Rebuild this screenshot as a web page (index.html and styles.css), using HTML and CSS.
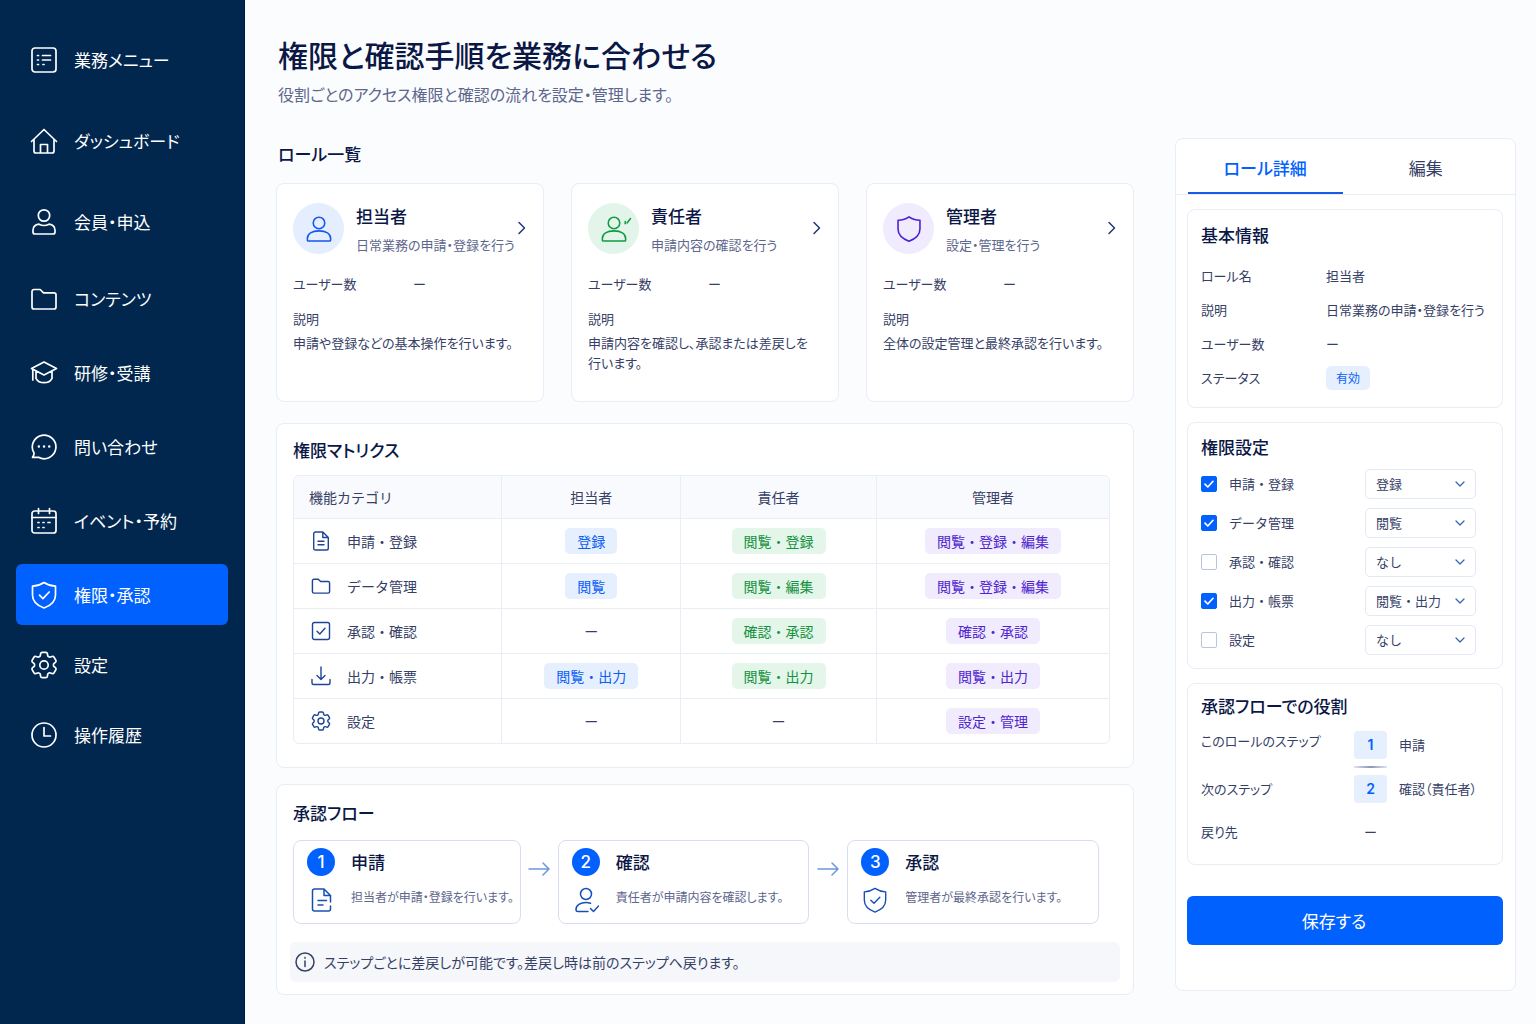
FILE: index.html
```html
<!DOCTYPE html>
<html lang="ja">
<head>
    <meta charset="UTF-8">
    <meta name="viewport" content="width=device-width, initial-scale=1.0">
    <title>権限・承認</title>
    <link rel="stylesheet" href="styles.css">
</head>
<body>
    <!-- Icon sprite -->
    <svg class="sprite" aria-hidden="true">
        <symbol id="i-list" viewBox="0 0 28 28">
            <rect x="2" y="2" width="24" height="24" rx="3"/>
            <path d="M12.5 9.5h8M12.5 14h8M7.5 9.5h1M7.5 14h1M7.5 18.5h1M13 18.5h1"/>
        </symbol>
        <symbol id="i-home" viewBox="0 0 28 28">
            <path d="M1.5 14.5 14 2.5l12.500 12M4 12.500V24a2 2 0 0 0 2 2h16a2 2 0 0 0 2-2V12.500M10.500 26v-8.500h7V26"/>
        </symbol>
        <symbol id="i-user" viewBox="0 0 28 28">
            <circle cx="14" cy="7.500" r="5.700"/>
            <path d="M9 16.200c-3.500.5-6 2.800-6 6V24a2 2 0 0 0 2 2h18a2 2 0 0 0 2-2v-1.800c0-3.200-2.500-5.500-6-6-1.500.8-3 1.300-5 1.300s-3.500-.5-5-1.300z"/>
        </symbol>
        <symbol id="i-member" viewBox="0 0 28 28">
            <circle cx="14" cy="7.500" r="6.200"/>
            <path d="M14 16c-7.500 0-12.500 3-12.500 8V26c0 .6.400 1 1 1h23c.6 0 1-.4 1-1v-2C26.500 19 21.500 16 14 16z"/>
        </symbol>
        <symbol id="i-folder" viewBox="0 0 28 28">
            <path d="M2 6.500a2 2 0 0 1 2-2h6.200l3.300 3.300H24a2 2 0 0 1 2 2V22a2 2 0 0 1-2 2H4a2 2 0 0 1-2-2z"/>
        </symbol>
        <symbol id="i-cap" viewBox="0 0 28 28">
            <path d="M14 3 26.500 9.500 14 16 1.500 9.500zM2.800 10.500V21M6 12.500v6.800c1.400 2.800 4.400 4.400 8 4.400s6.600-1.600 8-4.400v-6.800"/>
        </symbol>
        <symbol id="i-chat" viewBox="0 0 28 28">
            <path d="M8.500 24.300H2.500c1.200-1.500 1.700-2.800 1.500-4.300a11.800 11.800 0 1 1 4.500 4.300z"/>
            <path class="dots" d="M8.800 13.500h.1M14 13.500h.1M19.200 13.500h.1"/>
        </symbol>
        <symbol id="i-calendar" viewBox="0 0 28 28">
            <rect x="2" y="4" width="24" height="22" rx="2.500"/>
            <path d="M8.500 1.500v5M19.500 1.500v5M2 10.500h24M8 15.500h1M13 15.500h1M18 15.500h2M8 20.500h1M13 20.500h1"/>
        </symbol>
        <symbol id="i-shield-check" viewBox="0 0 28 28">
            <path d="M14 1.500c3.400 2.300 7.300 3.500 11.500 3.700V14c0 6-4.500 10.500-11.500 13C7 24.500 2.500 20 2.500 14V5.200C6.700 5 10.600 3.800 14 1.500z"/>
            <path d="m9.500 14.200 3.400 3.400 6.300-6.600"/>
        </symbol>
        <symbol id="i-shield" viewBox="0 0 28 28">
            <path d="M14 1c3 2.200 7 3.400 11.800 3.600V14c0 5.800-4.300 10.300-11.800 13.200C6.500 24.300 2.200 19.800 2.200 14V4.600C7 4.400 11 3.200 14 1z"/>
        </symbol>
        <symbol id="i-gear" viewBox="2 2 20 20">
            <path d="M9.594 3.940c.09-.542.56-.94 1.110-.94h2.593c.55 0 1.020.398 1.110.94l.213 1.281c.063.374.313.686.645.87.074.04.147.083.22.127.325.196.72.257 1.075.124l1.217-.456a1.125 1.125 0 0 1 1.370.49l1.296 2.247a1.125 1.125 0 0 1-.26 1.431l-1.003.827c-.293.241-.438.613-.43.992a7.723 7.723 0 0 1 0 .255c-.008.378.137.75.43.991l1.004.827c.424.35.534.955.26 1.430l-1.298 2.247a1.125 1.125 0 0 1-1.369.491l-1.217-.456c-.355-.133-.75-.072-1.076.124a6.470 6.470 0 0 1-.22.128c-.331.183-.581.495-.644.869l-.213 1.281c-.09.543-.56.94-1.110.94h-2.594c-.55 0-1.019-.398-1.110-.94l-.213-1.281c-.062-.374-.312-.686-.644-.87a6.520 6.520 0 0 1-.22-.127c-.325-.196-.72-.257-1.076-.124l-1.217.456a1.125 1.125 0 0 1-1.369-.49l-1.297-2.247a1.125 1.125 0 0 1 .26-1.431l1.004-.827c.292-.24.437-.613.43-.991a6.932 6.932 0 0 1 0-.255c.007-.38-.138-.751-.43-.992l-1.004-.827a1.125 1.125 0 0 1-.26-1.430l1.297-2.247a1.125 1.125 0 0 1 1.370-.491l1.216.456c.356.133.751.072 1.076-.124.072-.044.146-.086.22-.128.332-.183.582-.495.644-.869z"/>
            <circle cx="12" cy="12" r="3"/>
        </symbol>
        <symbol id="i-clock" viewBox="0 0 28 28">
            <circle cx="14" cy="14" r="12"/>
            <path d="M14 6.500V15h6.500"/>
        </symbol>
        <symbol id="i-doc" viewBox="0 0 20 20">
            <path d="M11.800 1H4.500A1.800 1.800 0 0 0 2.700 2.800v14.400A1.800 1.800 0 0 0 4.500 19h11a1.800 1.800 0 0 0 1.800-1.800V6.500zM11.800 1v5.500h5.500M7 10.300h6M7 13.800h6"/>
        </symbol>
        <symbol id="i-doc-edit" viewBox="0 0 26 26">
            <path d="M22.500 19v3a2 2 0 0 1-2 2h-14a2 2 0 0 1-2-2V4a2 2 0 0 1 2-2H16l6.500 6.500V15M16 2v6.500h6.500M10 13.500h8.500M10 18h5"/>
        </symbol>
        <symbol id="i-check-box" viewBox="0 0 20 20">
            <rect x="1.500" y="1.500" width="17" height="17" rx="2"/>
            <path d="m6 10.300 2.800 2.700L14 7.300"/>
        </symbol>
        <symbol id="i-download" viewBox="0 0 20 20">
            <path d="M10 1v12M6 9.500l4 4 4-4M1 13.500V17a1.500 1.500 0 0 0 1.500 1.500h15A1.500 1.500 0 0 0 19 17v-3.500"/>
        </symbol>
        <symbol id="i-user-check" viewBox="0 0 26 26">
            <circle cx="13" cy="7" r="5.500"/>
            <path d="M17.500 16.200c-1.400-.5-2.900-.7-4.500-.7-5.700 0-10 2.700-10 7 0 1.200.6 2 1.800 2H15M17.500 21.500l3 3 5-5.500"/>
        </symbol>
        <symbol id="i-arrow" viewBox="0 0 22 14">
            <path d="M1 7h20M15 1l6 6-6 6"/>
        </symbol>
        <symbol id="i-chevron" viewBox="0 0 10 14">
            <path d="m2 1.500 5.500 5.500L2 12.500"/>
        </symbol>
        <symbol id="i-info" viewBox="0 0 20 20">
            <circle cx="10" cy="10" r="9"/>
            <path d="M10 9v5.500M10 5.500v.8"/>
        </symbol>
    </svg>

    <div class="layout">
        <!-- Sidebar Navigation -->
        <nav class="sidebar" aria-label="業務メニュー">
            <div class="nav-group nav-group-top">
                <a class="nav-item" href="#"><svg class="icon"><use href="#i-list"/></svg>業務メニュー</a>
                <a class="nav-item" href="#"><svg class="icon"><use href="#i-home"/></svg>ダッシュボード</a>
                <a class="nav-item" href="#"><svg class="icon"><use href="#i-user"/></svg>会員・申込</a>
            </div>
            <div class="nav-group nav-group-main">
                <a class="nav-item" href="#"><svg class="icon"><use href="#i-folder"/></svg>コンテンツ</a>
                <a class="nav-item" href="#"><svg class="icon"><use href="#i-cap"/></svg>研修・受講</a>
                <a class="nav-item" href="#"><svg class="icon"><use href="#i-chat"/></svg>問い合わせ</a>
                <a class="nav-item" href="#"><svg class="icon"><use href="#i-calendar"/></svg>イベント・予約</a>
                <a class="nav-item active" href="#" aria-current="page"><svg class="icon"><use href="#i-shield-check"/></svg>権限・承認</a>
            </div>
            <div class="nav-group nav-group-bottom">
                <a class="nav-item" href="#"><svg class="icon icon-gear"><use href="#i-gear"/></svg>設定</a>
                <a class="nav-item" href="#"><svg class="icon"><use href="#i-clock"/></svg>操作履歴</a>
            </div>
        </nav>

        <!-- Main Content Area -->
        <main class="main-content">
            <header class="page-header">
                <h1>権限と確認手順を業務に合わせる</h1>
                <p>役割ごとのアクセス権限と確認の流れを設定・管理します。</p>
            </header>

            <div class="columns">
                <div class="content">
                    <!-- Role cards -->
                    <section class="roles">
                        <h2>ロール一覧</h2>
                        <div class="role-grid">
                            <article class="role-card">
                                <div class="role-head">
                                    <span class="avatar blue"><svg class="icon"><use href="#i-member"/></svg></span>
                                    <div class="role-name">
                                        <h3>担当者</h3>
                                        <p>日常業務の申請・登録を行う</p>
                                    </div>
                                    <a class="role-link" href="#" aria-label="担当者の詳細"><svg><use href="#i-chevron"/></svg></a>
                                </div>
                                <div class="role-users"><span>ユーザー数</span><span class="dash">ー</span></div>
                                <div class="role-label">説明</div>
                                <p class="role-text">申請や登録などの基本操作を行います。</p>
                            </article>
                            <article class="role-card">
                                <div class="role-head">
                                    <span class="avatar green">
                                        <svg class="icon"><use href="#i-member"/></svg>
                                        <svg class="mark" viewBox="0 0 8 8"><path d="M1.200 4.500v2.300M3 6l3.500-4.500"/></svg>
                                    </span>
                                    <div class="role-name">
                                        <h3>責任者</h3>
                                        <p>申請内容の確認を行う</p>
                                    </div>
                                    <a class="role-link" href="#" aria-label="責任者の詳細"><svg><use href="#i-chevron"/></svg></a>
                                </div>
                                <div class="role-users"><span>ユーザー数</span><span class="dash">ー</span></div>
                                <div class="role-label">説明</div>
                                <p class="role-text">申請内容を確認し、承認または差戻しを行います。</p>
                            </article>
                            <article class="role-card">
                                <div class="role-head">
                                    <span class="avatar purple"><svg class="icon"><use href="#i-shield"/></svg></span>
                                    <div class="role-name">
                                        <h3>管理者</h3>
                                        <p>設定・管理を行う</p>
                                    </div>
                                    <a class="role-link" href="#" aria-label="管理者の詳細"><svg><use href="#i-chevron"/></svg></a>
                                </div>
                                <div class="role-users"><span>ユーザー数</span><span class="dash">ー</span></div>
                                <div class="role-label">説明</div>
                                <p class="role-text">全体の設定管理と最終承認を行います。</p>
                            </article>
                        </div>
                    </section>

                    <!-- Permission matrix -->
                    <section class="card matrix">
                        <h2>権限マトリクス</h2>
                        <table>
                            <thead>
                                <tr>
                                    <th scope="col">機能カテゴリ</th>
                                    <th scope="col">担当者</th>
                                    <th scope="col">責任者</th>
                                    <th scope="col">管理者</th>
                                </tr>
                            </thead>
                            <tbody>
                                <tr>
                                    <th scope="row"><span class="category"><svg><use href="#i-doc"/></svg>申請・登録</span></th>
                                    <td><span class="badge blue">登録</span></td>
                                    <td><span class="badge green">閲覧・登録</span></td>
                                    <td><span class="badge purple">閲覧・登録・編集</span></td>
                                </tr>
                                <tr>
                                    <th scope="row"><span class="category"><svg class="wide"><use href="#i-folder"/></svg>データ管理</span></th>
                                    <td><span class="badge blue">閲覧</span></td>
                                    <td><span class="badge green">閲覧・編集</span></td>
                                    <td><span class="badge purple">閲覧・登録・編集</span></td>
                                </tr>
                                <tr>
                                    <th scope="row"><span class="category"><svg><use href="#i-check-box"/></svg>承認・確認</span></th>
                                    <td><span class="dash">ー</span></td>
                                    <td><span class="badge green">確認・承認</span></td>
                                    <td><span class="badge purple">確認・承認</span></td>
                                </tr>
                                <tr>
                                    <th scope="row"><span class="category"><svg><use href="#i-download"/></svg>出力・帳票</span></th>
                                    <td><span class="badge blue">閲覧・出力</span></td>
                                    <td><span class="badge green">閲覧・出力</span></td>
                                    <td><span class="badge purple">閲覧・出力</span></td>
                                </tr>
                                <tr>
                                    <th scope="row"><span class="category"><svg><use href="#i-gear"/></svg>設定</span></th>
                                    <td><span class="dash">ー</span></td>
                                    <td><span class="dash">ー</span></td>
                                    <td><span class="badge purple">設定・管理</span></td>
                                </tr>
                            </tbody>
                        </table>
                    </section>

                    <!-- Approval flow -->
                    <section class="card flow">
                        <h2>承認フロー</h2>
                        <div class="steps">
                            <div class="step">
                                <span class="step-number">1</span>
                                <h3>申請</h3>
                                <svg class="step-icon"><use href="#i-doc-edit"/></svg>
                                <p>担当者が申請・登録を行います。</p>
                            </div>
                            <svg class="arrow" aria-hidden="true"><use href="#i-arrow"/></svg>
                            <div class="step">
                                <span class="step-number">2</span>
                                <h3>確認</h3>
                                <svg class="step-icon"><use href="#i-user-check"/></svg>
                                <p>責任者が申請内容を確認します。</p>
                            </div>
                            <svg class="arrow" aria-hidden="true"><use href="#i-arrow"/></svg>
                            <div class="step">
                                <span class="step-number">3</span>
                                <h3>承認</h3>
                                <svg class="step-icon"><use href="#i-shield-check"/></svg>
                                <p>管理者が最終承認を行います。</p>
                            </div>
                        </div>
                        <p class="note"><svg><use href="#i-info"/></svg>ステップごとに差戻しが可能です。差戻し時は前のステップへ戻ります。</p>
                    </section>
                </div>

                <!-- Role detail panel -->
                <aside class="panel">
                    <div class="tabs" role="tablist">
                        <button class="tab selected" type="button" role="tab" aria-selected="true">ロール詳細</button>
                        <button class="tab" type="button" role="tab" aria-selected="false">編集</button>
                    </div>
                    <form class="panel-body">
                        <section class="box info">
                            <h2>基本情報</h2>
                            <dl>
                                <dt>ロール名</dt><dd>担当者</dd>
                                <dt>説明</dt><dd>日常業務の申請・登録を行う</dd>
                                <dt>ユーザー数</dt><dd><span class="dash">ー</span></dd>
                                <dt>ステータス</dt><dd><span class="badge small blue">有効</span></dd>
                            </dl>
                        </section>

                        <section class="box permissions">
                            <h2>権限設定</h2>
                            <div class="permission">
                                <input type="checkbox" id="perm-apply" checked>
                                <label for="perm-apply">申請・登録</label>
                                <select aria-label="申請・登録の権限"><option>登録</option><option>なし</option></select>
                            </div>
                            <div class="permission">
                                <input type="checkbox" id="perm-data" checked>
                                <label for="perm-data">データ管理</label>
                                <select aria-label="データ管理の権限"><option>閲覧</option><option>なし</option></select>
                            </div>
                            <div class="permission">
                                <input type="checkbox" id="perm-approve">
                                <label for="perm-approve">承認・確認</label>
                                <select aria-label="承認・確認の権限"><option>なし</option><option>閲覧</option></select>
                            </div>
                            <div class="permission">
                                <input type="checkbox" id="perm-output" checked>
                                <label for="perm-output">出力・帳票</label>
                                <select aria-label="出力・帳票の権限"><option>閲覧・出力</option><option>なし</option></select>
                            </div>
                            <div class="permission">
                                <input type="checkbox" id="perm-setting">
                                <label for="perm-setting">設定</label>
                                <select aria-label="設定の権限"><option>なし</option><option>閲覧</option></select>
                            </div>
                        </section>

                        <section class="box flow-role">
                            <h2>承認フローでの役割</h2>
                            <dl>
                                <dt>このロールのステップ</dt>
                                <dd><span class="step-tag">1</span>申請</dd>
                                <dd class="divider"></dd>
                                <dt class="middle">次のステップ</dt>
                                <dd><span class="step-tag">2</span>確認（責任者）</dd>
                                <dt class="last">戻り先</dt>
                                <dd class="last"><span class="dash">ー</span></dd>
                            </dl>
                        </section>

                        <button class="save" type="submit">保存する</button>
                    </form>
                </aside>
            </div>
        </main>
    </div>
</body>
</html>
```

FILE: styles.css
```css
:root {
    --color-bg: #fbfcfe;
    --color-sidebar: #01274f;
    --color-primary: #0061ff;
    --color-heading: #0b1745;
    --color-text: #364066;
    --color-muted: #5d668c;
    --color-border: #e8edf6;
    --color-icon: #1d4596;
    --font-family: "Noto Sans CJK JP", "Noto Sans", sans-serif;
}

* {
    box-sizing: border-box;
    margin: 0;
    padding: 0;
}

body {
    background: var(--color-bg);
    color: var(--color-text);
    font-family: var(--font-family);
    font-size: 13px;
    line-height: 20px;
    font-feature-settings: "palt"; /* proportional kana */
}

button,
input,
select {
    font: inherit;
    font-feature-settings: inherit;
    color: inherit;
}

svg {
    display: block;
    flex: none;
    fill: none;
    stroke: currentColor;
    stroke-width: 1.5;
    stroke-linecap: round;
    stroke-linejoin: round;
}

.sprite {
    display: none;
}

.dots {
    stroke-width: 2.4;
}

h2,
h3 {
    color: var(--color-heading);
    font-size: 17px;
    line-height: 24px;
    font-weight: 500;
}

.layout {
    display: flex;
    min-height: 100vh;
}

/* Sidebar */
.sidebar {
    flex: none;
    width: 245px;
    padding: 29px 16px;
    background: var(--color-sidebar);
    border-right: 1px solid #001a3d;
}

.nav-group {
    display: flex;
    flex-direction: column;
}

.nav-group-top {
    gap: 20px;
    margin-bottom: 16px;
}

.nav-group-main {
    gap: 13px;
    margin-bottom: 9px;
}

.nav-group-bottom {
    gap: 9px;
}

.nav-item {
    display: flex;
    align-items: center;
    gap: 16px;
    height: 61px;
    padding-left: 14px;
    border-radius: 6px;
    color: #fff;
    font-size: 17px;
    text-decoration: none;
}

.nav-item .icon {
    width: 28px;
    height: 28px;
    stroke-width: 1.7;
}

.nav-item .icon-gear {
    stroke-width: 1.2;
}

.nav-item.active {
    background: var(--color-primary);
}

/* Main content */
.main-content {
    flex: 1;
    min-width: 0;
    padding: 33px 20px 28px 31px;
}

.page-header {
    margin-bottom: 32px;
    padding-left: 2px;
}

.page-header h1 {
    color: var(--color-heading);
    font-size: 30px;
    line-height: 42px;
    font-weight: 500;
}

.page-header p {
    margin-top: 7px;
    color: var(--color-muted);
    font-size: 16px;
    line-height: 24px;
}

.columns {
    display: grid;
    grid-template-columns: minmax(0, 1fr) 341px;
    gap: 41px;
    align-items: start;
}

.card,
.role-card,
.box,
.panel {
    background: #fff;
    border: 1px solid var(--color-border);
    border-radius: 8px;
}

/* Role cards */
.roles h2 {
    margin-bottom: 13px;
    padding-left: 2px;
    line-height: 32px;
}

.role-grid {
    display: grid;
    grid-template-columns: repeat(3, minmax(0, 1fr));
    gap: 27px;
}

.role-card {
    min-height: 219px;
    padding: 19px 16px;
}

.role-head {
    display: flex;
    align-items: flex-start;
    gap: 12px;
    margin-bottom: 19px;
}

.avatar {
    position: relative;
    display: flex;
    flex: none;
    align-items: center;
    justify-content: center;
    width: 51px;
    height: 51px;
    border-radius: 50%;
}

.avatar .icon {
    width: 26px;
    height: 28px;
    stroke-width: 1.7;
}

.avatar .mark {
    position: absolute;
    top: 14px;
    right: 7px;
    width: 8px;
    height: 8px;
}

.avatar.blue {
    background: #e4eefe;
    color: #1556f0;
}

.avatar.green {
    background: #e3f5ea;
    color: #0f9a43;
}

.avatar.purple {
    background: #f0ebfe;
    color: #4a1fd6;
}

.role-name {
    flex: 1;
    min-width: 0;
    white-space: nowrap;
}

.role-name h3 {
    margin-bottom: 6px;
    line-height: 26px;
}

.role-name p {
    color: var(--color-muted);
}

.role-link {
    padding-top: 18px;
    color: #23376f;
}

.role-link svg {
    width: 10px;
    height: 14px;
}

.role-users {
    display: flex;
    margin-bottom: 15px;
}

.role-users span:first-child {
    width: 120px;
}

.role-label {
    margin-bottom: 4px;
}

.role-text {
    padding-right: 6px;
}

/* Permission matrix */
.matrix {
    margin-top: 21px;
    padding: 14px 23px 23px 16px;
}

.matrix table {
    width: 100%;
    margin-top: 13px;
    border: 1px solid var(--color-border);
    border-radius: 6px;
    border-spacing: 0;
    table-layout: fixed;
    font-size: 14px;
    font-feature-settings: normal;
}

.matrix th,
.matrix td {
    height: 45px;
    border-top: 1px solid var(--color-border);
    border-left: 1px solid var(--color-border);
    font-weight: 400;
    text-align: center;
}

.matrix thead th {
    height: 42px;
    border-top: 0;
    background: #f9fafd;
}

.matrix thead th:first-child {
    width: 25.4%;
    border-radius: 6px 0 0 0;
}

.matrix thead th:nth-child(2) {
    width: 22%;
}

.matrix thead th:nth-child(3) {
    width: 24%;
}

.matrix thead th:last-child {
    border-radius: 0 6px 0 0;
}

.matrix th:first-child {
    padding-left: 15px;
    border-left: 0;
    text-align: left;
}

.category {
    display: flex;
    align-items: center;
    gap: 16px;
    padding-left: 2px;
}

.category svg {
    width: 20px;
    height: 20px;
    color: var(--color-icon);
    stroke-width: 1.4;
}

.category .wide {
    stroke-width: 2;
}

.badge {
    display: inline-block;
    padding: 3px 12px;
    border-radius: 5px;
    vertical-align: middle;
}

.badge.blue {
    background: #e6effd;
    color: #0b5ff5;
}

.badge.green {
    background: #e4f6ea;
    color: #15923f;
}

.badge.purple {
    background: #f0ebfd;
    color: #4f24cf;
}

.badge.small {
    padding: 2px 10px;
    font-size: 12px;
}

/* Approval flow */
.flow {
    margin-top: 16px;
    padding: 16px 16px 12px;
}

.steps {
    display: grid;
    grid-template-columns: 228fr 37px 252fr 38px 252fr;
    align-items: start;
    margin: 15px 18px 0 0;
}

.step {
    display: grid;
    grid-template-columns: 28px 1fr;
    gap: 8px 16px;
    min-height: 84px;
    padding: 7px 0 7px 13px;
    border: 1px solid #d5dff1;
    border-radius: 8px;
    white-space: nowrap;
}

.step h3 {
    line-height: 28px;
}

.step p {
    color: var(--color-muted);
    font-size: 12px;
}

.step-number {
    width: 28px;
    height: 28px;
    border-radius: 50%;
    background: var(--color-primary);
    color: #fff;
    font-family: Inter, sans-serif;
    font-size: 17px;
    line-height: 28px;
    font-weight: 500;
    text-align: center;
}

.step-icon {
    justify-self: center;
    width: 26px;
    height: 26px;
    color: #1750b5;
}

.arrow {
    justify-self: center;
    width: 22px;
    height: 14px;
    margin-top: 22px;
    color: #6f96de;
}

.note {
    display: flex;
    align-items: center;
    gap: 9px;
    margin: 18px -3px 0;
    padding: 10px 5px;
    border-radius: 6px;
    background: #f5f7fb;
    font-size: 14px;
}

.note svg {
    width: 20px;
    height: 20px;
}

/* Detail panel */
.tabs {
    display: grid;
    grid-template-columns: 1fr 1fr;
    gap: 6px;
    height: 56px;
    padding: 0 12px;
    border-bottom: 1px solid var(--color-border);
}

.tab {
    padding-top: 5px;
    border: 0;
    border-bottom: 2px solid transparent;
    background: none;
    font-size: 17px;
    cursor: pointer;
}

.tab.selected {
    border-bottom-color: #1759e8;
    color: var(--color-primary);
    font-weight: 500;
}

.panel-body {
    display: flex;
    flex-direction: column;
    gap: 14px;
    padding: 14px 12px 45px 11px;
}

.info {
    padding: 13px 8px 12px 13px;
}

.info dl {
    display: grid;
    grid-template-columns: 125px 1fr;
    grid-auto-rows: 34px;
    align-items: center;
    margin-top: 12px;
    white-space: nowrap;
}

.permissions {
    padding: 12px 26px 9px 13px;
    font-feature-settings: normal;
}

.permissions h2 {
    margin-bottom: 5px;
}

.permission {
    display: flex;
    align-items: center;
    gap: 12px;
    height: 39px;
}

.permission label {
    flex: 1;
}

.permission input {
    appearance: none;
    width: 16px;
    height: 16px;
    border: 1px solid #b9c5de;
    border-radius: 2px;
    background: #fff;
}

.permission input:checked {
    border-color: var(--color-primary);
    background: var(--color-primary) url("data:image/svg+xml,%3Csvg xmlns='http://www.w3.org/2000/svg' viewBox='0 0 14 14' fill='none' stroke='white' stroke-width='1.7' stroke-linecap='round' stroke-linejoin='round'%3E%3Cpath d='m3 7.200 2.800 2.800L11 4.300'/%3E%3C/svg%3E") center / 14px no-repeat;
}

.permission select {
    appearance: none;
    width: 111px;
    height: 30px;
    padding: 0 28px 0 10px;
    border: 1px solid #e2e8f4;
    border-radius: 5px;
    background: #fff url("data:image/svg+xml,%3Csvg xmlns='http://www.w3.org/2000/svg' viewBox='0 0 10 10' fill='none' stroke='%233568b8' stroke-width='1.300' stroke-linecap='round' stroke-linejoin='round'%3E%3Cpath d='m1 3 4 4 4-4'/%3E%3C/svg%3E") right 10px center / 10px no-repeat;
}

.flow-role {
    padding: 10px 8px 22px 13px;
}

.flow-role dl {
    display: grid;
    grid-template-columns: 153px 1fr;
    align-items: start;
    row-gap: 7px;
    margin-top: 13px;
    white-space: nowrap;
}

.flow-role dd {
    display: flex;
    align-items: center;
    gap: 12px;
}

.flow-role .middle {
    align-self: center;
}

.flow-role .divider {
    grid-column: 2;
    width: 33px;
    height: 2px;
    background: linear-gradient(90deg, #dfe5ef, #8a97b8 50%, #dfe5ef);
}

.flow-role .last {
    margin-top: 12px;
}

.flow-role .last .dash {
    width: 33px;
    text-align: center;
}

.step-tag {
    width: 33px;
    border-radius: 4px;
    background: #e6effd;
    color: var(--color-primary);
    font-family: Inter, sans-serif;
    font-size: 14px;
    line-height: 28px;
    font-weight: 600;
    text-align: center;
}

.save {
    height: 49px;
    margin-top: 17px;
    padding-right: 22px;
    border: 0;
    border-radius: 6px;
    background: var(--color-primary);
    color: #fff;
    font-size: 17px;
    cursor: pointer;
}
```
